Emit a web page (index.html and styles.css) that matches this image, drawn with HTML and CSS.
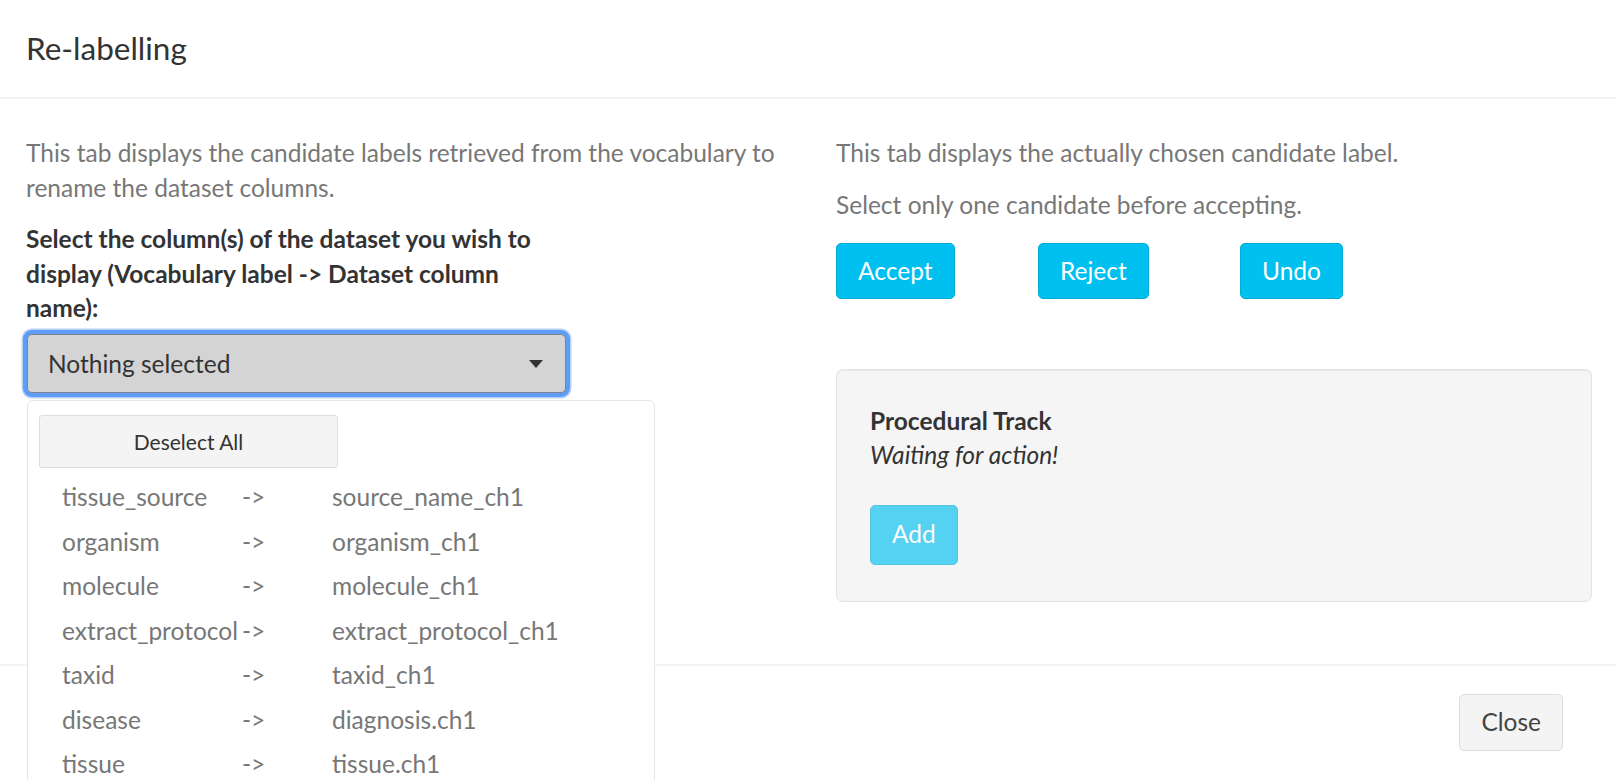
FILE: index.html
```html
<!DOCTYPE html>
<html lang="en">
<head>
<meta charset="utf-8">
<title>Re-labelling</title>
<link rel="stylesheet" href="styles.css">
</head>
<body>
<div class="modal">
  <header class="modal-header">
    <h4 class="modal-title">Re-labelling</h4>
  </header>
  <div class="modal-body">
    <div class="col col-left">
      <p class="muted">This tab displays the candidate labels retrieved from the vocabulary to rename the dataset columns.</p>
      <div class="form-group">
        <label class="control-label">Select the column(s) of the dataset you wish to display (Vocabulary label -&gt; Dataset column name):</label>
        <div class="picker">
          <button class="picker-btn" type="button">
            <span class="picker-text">Nothing selected</span>
            <span class="caret"></span>
          </button>
          <div class="dropdown-menu">
            <button class="btn-deselect" type="button">Deselect All</button>
            <ul class="options">
              <li><span>tissue_source</span><span>-&gt;</span><span>source_name_ch1</span></li>
              <li><span>organism</span><span>-&gt;</span><span>organism_ch1</span></li>
              <li><span>molecule</span><span>-&gt;</span><span>molecule_ch1</span></li>
              <li><span>extract_protocol</span><span>-&gt;</span><span>extract_protocol_ch1</span></li>
              <li><span>taxid</span><span>-&gt;</span><span>taxid_ch1</span></li>
              <li><span>disease</span><span>-&gt;</span><span>diagnosis.ch1</span></li>
              <li><span>tissue</span><span>-&gt;</span><span>tissue.ch1</span></li>
            </ul>
          </div>
        </div>
      </div>
    </div>
    <div class="col col-right">
      <p class="muted">This tab displays the actually chosen candidate label.</p>
      <p class="muted">Select only one candidate before accepting.</p>
      <div class="btn-row">
        <div class="btn-cell"><button class="btn btn-info" type="button">Accept</button></div>
        <div class="btn-cell"><button class="btn btn-info" type="button">Reject</button></div>
        <div class="btn-cell"><button class="btn btn-info" type="button">Undo</button></div>
      </div>
      <div class="well">
        <div class="well-title">Procedural Track</div>
        <div class="well-status">Waiting for action!</div>
        <button class="btn btn-info btn-add" type="button" disabled>Add</button>
      </div>
    </div>
  </div>
  <footer class="modal-footer">
    <button class="btn btn-default" type="button">Close</button>
  </footer>
</div>
</body>
</html>
```

FILE: styles.css
```css
html, body {
  margin: 0;
  padding: 0;
  height: 780px;
  overflow: hidden;
  background: #ffffff;
}

body {
  font-family: "Lato", "Liberation Sans", sans-serif;
  font-size: 24.5px;
  line-height: 34.5px;
  color: #333333;
}

.modal {
  width: 1616px;
}

.modal-header {
  height: 97px;
  padding: 0 26px;
  display: flex;
  align-items: center;
  border-bottom: 2px solid #f4f4f4;
}

.modal-title {
  margin: 0;
  font-size: 31.5px;
  line-height: 1.2;
  font-weight: 400;
  color: #333333;
}

.modal-body {
  display: grid;
  grid-template-columns: 756px 756px;
  column-gap: 54px;
  padding: 37px 0 62px 26px;
}

.muted {
  margin: 0 0 17px;
  color: #777777;
}

.form-group {
  width: 540px;
}

.control-label {
  display: block;
  font-weight: 700;
  margin-bottom: 8.5px;
}

.picker {
  position: relative;
  margin-left: 1px;
}

.picker-btn {
  display: flex;
  align-items: center;
  justify-content: space-between;
  width: 539px;
  height: 59px;
  padding: 0 22px 0 20px;
  background: #d4d4d4;
  border: 1.75px solid #7b8592;
  border-radius: 5px;
  box-shadow: 0 0 0 4px #5d9df3, 0 0 0 5.5px #b6d2f8;
  font-family: inherit;
  font-size: 24.5px;
  color: #333333;
  text-align: left;
}

.caret {
  width: 0;
  height: 0;
  border-top: 8px solid #333333;
  border-left: 7px solid transparent;
  border-right: 7px solid transparent;
}

.dropdown-menu {
  position: absolute;
  top: 66px;
  left: 0;
  width: 628px;
  box-sizing: border-box;
  padding: 14px 0 40px;
  background: #ffffff;
  border: 1.75px solid #e6e6e6;
  border-radius: 6px;
}

.btn-deselect {
  display: block;
  margin-left: 11px;
  width: 299px;
  height: 53px;
  background: #f4f4f4;
  border: 1.75px solid #dddddd;
  border-radius: 3px;
  font-family: inherit;
  font-size: 21px;
  color: #333333;
}

.options {
  list-style: none;
  margin: 7px 0 0;
  padding: 0 0 0 34px;
}

.options li {
  display: grid;
  grid-template-columns: 180px 90px auto;
  height: 44.5px;
  line-height: 44.5px;
  color: #777777;
  white-space: nowrap;
}

.btn-row {
  display: grid;
  grid-template-columns: 202px 202px 202px;
  margin-top: 21px;
}

.btn {
  font-family: inherit;
  font-size: 24.5px;
  border-radius: 5px;
  border: 1.75px solid transparent;
  padding: 0 21px;
  line-height: 1;
}

.btn-info {
  height: 56px;
  background: #00c0ef;
  border-color: #00acd6;
  color: #ffffff;
}

.well {
  margin-top: 70px;
  height: 233px;
  box-sizing: border-box;
  padding: 33px;
  background: #f5f5f5;
  border: 1.75px solid #e3e3e3;
  border-radius: 7px;
  box-shadow: inset 0 1px 1px rgba(0, 0, 0, 0.05);
}

.well-title {
  font-weight: 700;
  line-height: 35px;
}

.well-status {
  font-style: italic;
}

.btn-add {
  margin-top: 32px;
  height: 60px;
  opacity: 0.65;
}

.modal-footer {
  display: flex;
  justify-content: flex-end;
  border-top: 2px solid #f4f4f4;
  padding: 28px 53px 26px 0;
}

.btn-default {
  height: 57px;
  background: #f4f4f4;
  border-color: #dddddd;
  color: #444444;
}
```
